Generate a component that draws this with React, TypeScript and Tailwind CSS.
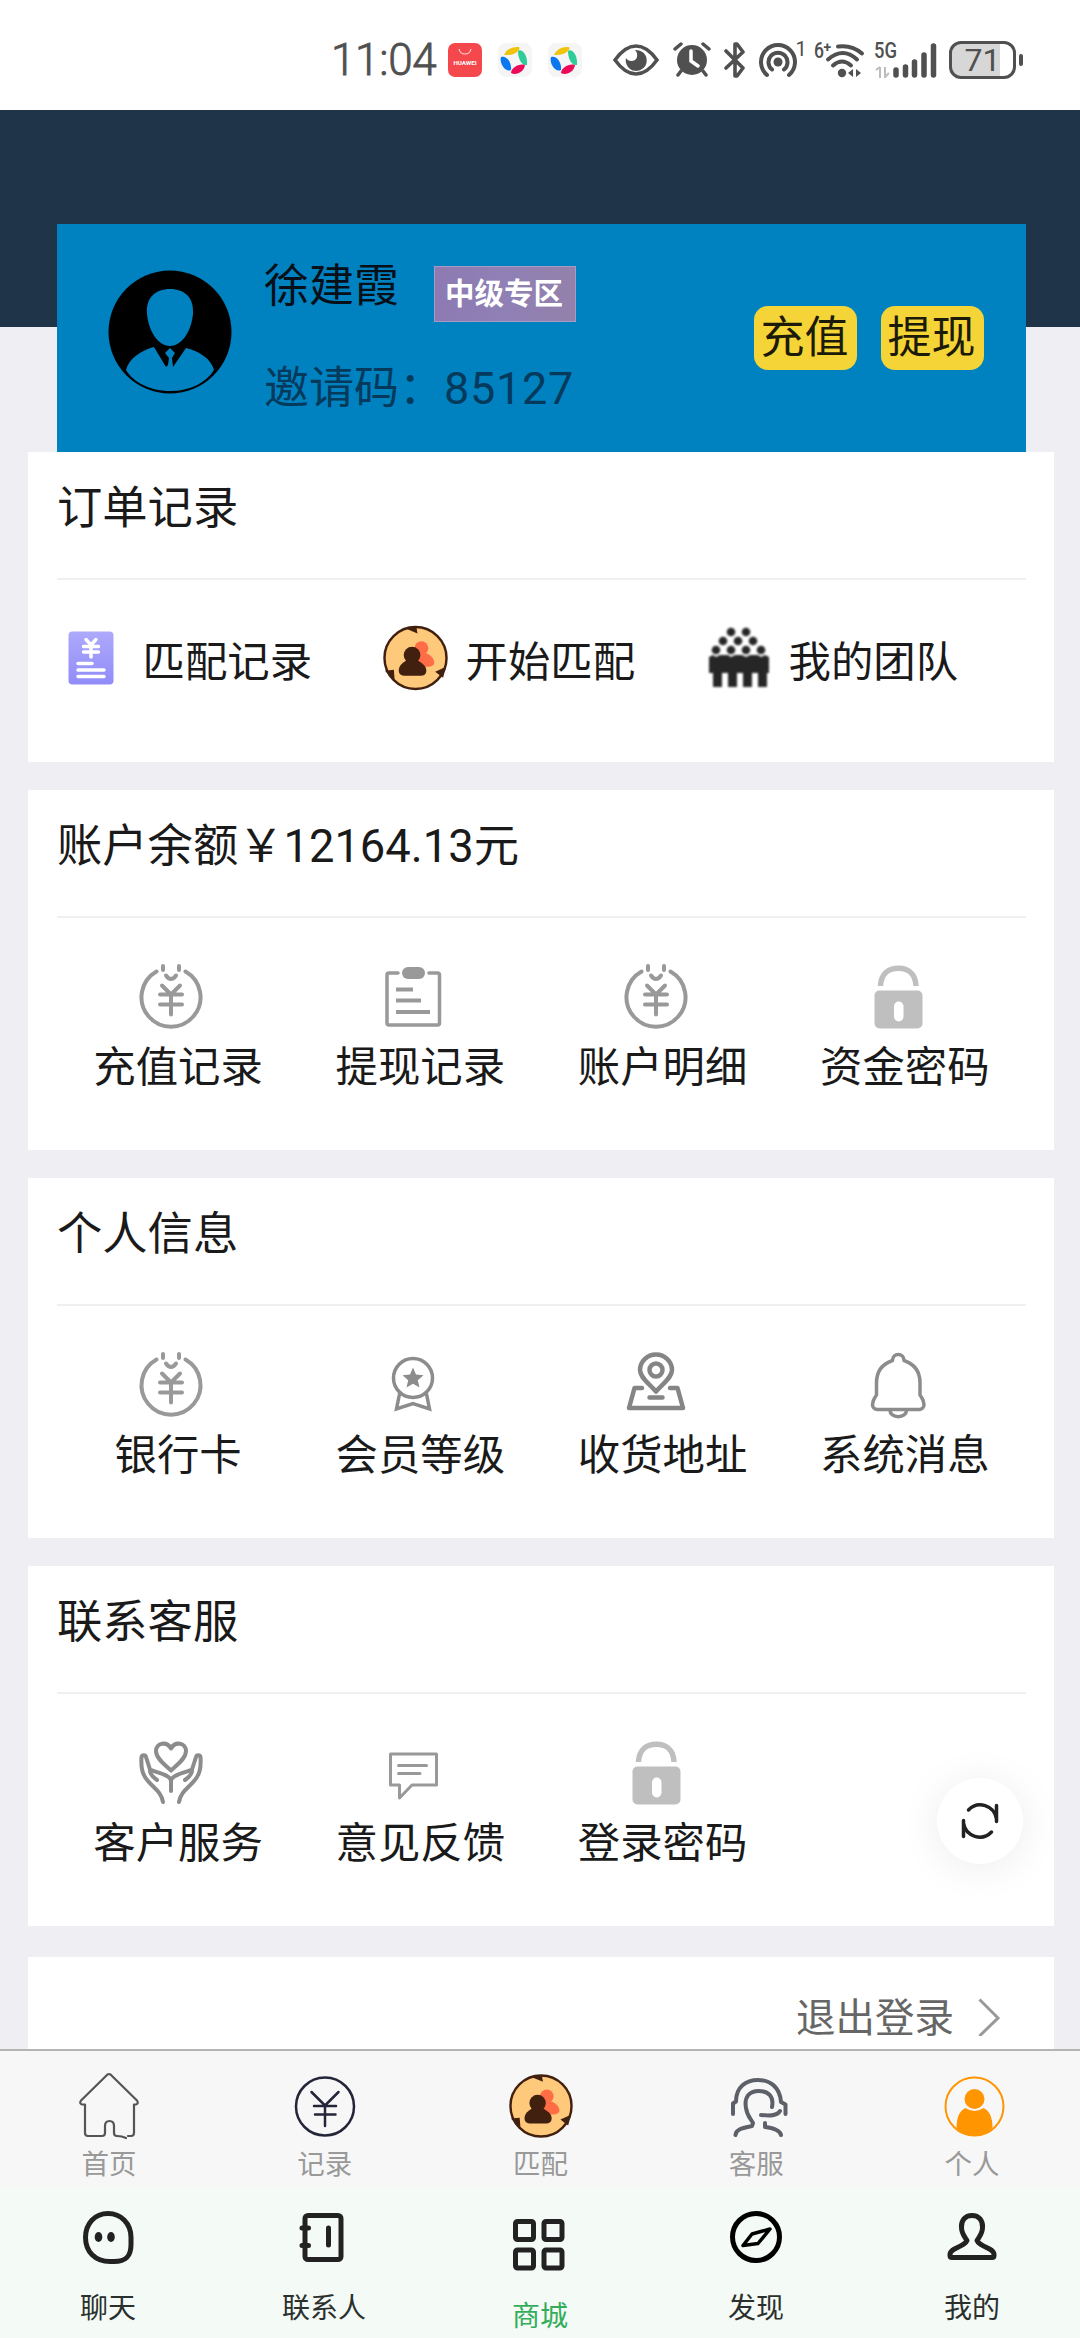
import { ReactNode } from 'react';

type Entry = { label: string; icon: ReactNode };

function LineIcon({ children, color = '#999', width = 4 }: { children: ReactNode; color?: string; width?: number }) {
  return (
    <svg
      className="h-16 w-16 overflow-visible"
      viewBox="0 0 64 64"
      fill="none"
      stroke={color}
      strokeWidth={width}
      strokeLinecap="round"
      strokeLinejoin="round"
    >
      {children}
    </svg>
  );
}

function MoneyBagIcon() {
  return (
    <LineIcon>
      <path d="M17.5 7.500A29.500 29.500 0 1 0 46.500 7.500" />
      <path d="M24 2v4M40 2v4M27 11.500q5 7 10 0" />
      <path d="M23 21.500l9 9 9-9M21 30.500h22M21 40.500h22M32 30.500v20" />
    </LineIcon>
  );
}

function ClipboardIcon() {
  return (
    <LineIcon width={3.5}>
      <path d="M17 9H8a2 2 0 0 0-2 2v48a2 2 0 0 0 2 2h48.500a2 2 0 0 0 2-2V11a2 2 0 0 0-2-2H48" />
      <rect x="21" y="3" width="23" height="12" rx="6" fill="#999" stroke="none" />
      <path d="M15 25.500h17M15 36.500h25M15 48h34" strokeWidth="4" strokeLinecap="butt" />
    </LineIcon>
  );
}

function LockIcon() {
  return (
    <LineIcon color="#bfbfbf" width={5.5}>
      <path d="M14.500 22C15 10 22.500 4.300 32.500 4.300S49.500 10 50 22" strokeLinecap="butt" />
      <rect x="8.500" y="26.500" width="48" height="38" rx="5" fill="#bfbfbf" stroke="none" />
      <rect x="28" y="37.500" width="9.500" height="20" rx="4.700" fill="#fff" stroke="none" />
    </LineIcon>
  );
}

function MedalIcon() {
  return (
    <LineIcon color="#8c8c8c" width={3.5}>
      <circle cx="32" cy="26" r="19.500" />
      <path d="M32 15.500l3 7 7.500.7-5.700 5 1.700 7.400-6.500-3.900-6.500 3.900 1.700-7.400-5.700-5 7.500-.7z" fill="#8c8c8c" stroke="none" />
      <path d="M18.500 42l-3 15L32 51.500l16.500 5.500-3-15" strokeLinejoin="miter" />
    </LineIcon>
  );
}

function LocationIcon() {
  return (
    <LineIcon color="#858585" width={4.5}>
      <path d="M32 39.500C25 31 16 26 16 18a16 15.500 0 0 1 32 0c0 8-9 13-16 21.500z" />
      <circle cx="32" cy="18" r="6.500" />
      <path d="M18 36h-7.500L5 56h54L53.500 36H46M25.500 45.500h13" />
    </LineIcon>
  );
}

function BellIcon() {
  return (
    <LineIcon color="#8c8c8c" width={3.5}>
      <path d="M26.500 8.500c0-8 11.500-8 11.500 0 10.500 3.500 16 11 16 22.500V43c2 3.500 4 5 4 9.500 0 3-2 5-5 5H11.500c-3 0-5-2-5-5 0-4.500 2-6 4-9.500V31c0-11.500 5.500-19 16-22.500z" />
      <path d="M24 58.500a8 6 0 0 0 16.500 0" />
    </LineIcon>
  );
}

function CareIcon() {
  return (
    <LineIcon color="#8c8c8c" width={4}>
      <path d="M32 30.500C27 25.500 17 19 17 11 17 2.500 28 1 32 8.500 36 1 47 2.500 47 11c0 8-10 14.500-15 19.500z" />
      <path d="M24 62c-2-12-12-15-18-25-4-6-4-13-3.500-20 .5-2.500 4-2.500 4.500 0l4 12.500c6 3 20 5 21 11V51" />
      <path d="M40 62c2-12 12-15 18-25 4-6 4-13 3.500-20-.5-2.500-4-2.500-4.500 0l-4 12.500c-6 3-20 5-21 11" />
      <path d="M11 30.500c0 4 3.500 7 7 9.500M53 30.500c0 4-3.500 7-7 9.500" />
    </LineIcon>
  );
}

function MessageIcon() {
  return (
    <LineIcon width={3}>
      <path d="M9.500 14h46v31H31L18.500 58V45h-9zM17.500 25.500h28M17.500 33.500h21.500" />
    </LineIcon>
  );
}

function CookieIcon({ className }: { className: string }) {
  return (
    <svg className={className} viewBox="0 0 66 66">
      <circle cx="33" cy="33" r="31.500" fill="#ffc97b" stroke="#42200f" strokeWidth="2.500" />
      <path d="M23 3l12 5-1-6zM2 46l9-1 1 12zM64 42l-11 5 8 6z" fill="#42200f" />
      <circle cx="39" cy="23" r="7" fill="#ff6d47" />
      <path d="M34 28h9c6 2 9 6 9 10 0 3-4 4-9 4h-9z" fill="#ff6d47" />
      <circle cx="29.500" cy="30" r="8.500" fill="#42200f" />
      <path d="M25 35h9c6 3 10 6 10 11 0 3-2 5-5 5H21c-3 0-5-2-5-5 0-5 3-8 9-11z" fill="#42200f" />
    </svg>
  );
}

function BillIcon() {
  return (
    <svg className="h-[54px] w-[46px]" viewBox="0 0 46 54">
      <defs>
        <linearGradient id="bill" x1="0" y1="0" x2="0" y2="1">
          <stop offset="0" stopColor="#ada9fb" />
          <stop offset="1" stopColor="#918cf8" />
        </linearGradient>
      </defs>
      <rect x="0.500" y="0.500" width="45" height="53" rx="4" fill="url(#bill)" />
      <path d="M18 8.500l5 5.500 5-5.500M23 14v12M15.500 15.500h15M15.500 21h15M10 32.500h14M10 39h26M10 45.500h26" fill="none" stroke="#fff" strokeWidth="3.500" strokeLinecap="round" />
    </svg>
  );
}

const teamHeads = [
  [23, 5], [38, 5],
  [15, 14], [30, 14], [45, 14],
  [8, 23], [23, 23], [38, 23], [53, 23],
];

function TeamIcon() {
  return (
    <svg className="h-[62px] w-[62px] blur-[0.8px]" viewBox="0 0 62 62" fill="#262626">
      {teamHeads.map(([x, y]) => (
        <circle key={`${x}-${y}`} cx={x} cy={y} r="4.300" />
      ))}
      <path d="M1 30l4-2 3 2 4-2h8l3 2 4-2h7l4 2 4-2h8l3 2 4-2 4 2v16h-2v14h-9V46h-6v14h-9V46h-6v14h-9V46h-6v14H5V46H1z" />
    </svg>
  );
}

function AvatarIcon() {
  return (
    <svg className="h-[124px] w-[124px]" viewBox="0 0 124 124">
      <circle cx="62" cy="62" r="61.500" fill="#000" />
      <path d="M62 19c15 0 24 9 23 24-1 16-10 33-23 33S40 59 39 43c-1-15 8-24 23-24z" fill="#0082c1" />
      <path d="M46 77l12 20 2-2 1-7-4-5 5-5 5 5-3 5 1 9 13-19c12 3 25 10 28 22-8 13-24 21-44 21s-37-9-44-21c3-12 16-20 28-23z" fill="#0082c1" />
    </svg>
  );
}

function BrowserIcon() {
  return (
    <svg className="h-[34px] w-[34px]" viewBox="0 0 34 34">
      <rect width="34" height="34" rx="8" fill="#f5f5f5" />
      <path d="M6 12q4-9 15-8c2 2-3 9-15 8z" fill="#f0c30c" />
      <path d="M20 8c3-3 10 3 9 14-6 1-9-7-9-14z" fill="#2fcb98" />
      <path d="M3 14c5-2 11 5 10 13C8 30 1 21 3 14z" fill="#0b78f0" />
      <path d="M13 30c0-5 8-10 14-8-1 7-9 11-14 8z" fill="#ee0a5b" />
    </svg>
  );
}

function StatusBar() {
  return (
    <div className="flex h-[110px] shrink-0 items-center bg-white pt-[10px] pl-[331px] text-[#505050]">
      <span className="w-[117px] font-[Roboto] text-[44px] leading-none font-light tracking-[-0.3px] [-webkit-text-stroke:0.8px_#505050]">11:04</span>
      <svg className="h-[34px] w-[34px]" viewBox="0 0 34 34">
        <rect width="34" height="34" rx="7" fill="#f5484d" />
        <path d="M11 6q1 5 6 5t6-5" fill="none" stroke="#ffd5d5" strokeWidth="1.200" />
        <text x="17" y="22" textAnchor="middle" fontFamily="Roboto, sans-serif" fontSize="6.200" fontWeight="700" fill="#fff">HUAWEI</text>
      </svg>
      <div className="ml-4 flex gap-4">
        <BrowserIcon />
        <BrowserIcon />
      </div>

      <svg className="ml-[31px] h-[34px] w-[46px]" viewBox="0 0 46 34">
        <path d="M2 17Q12 3 23 3t21 14Q34 31 23 31T2 17z" fill="none" stroke="#505050" strokeWidth="3.500" />
        <path d="M22 7a10.500 10.500 0 1 1-9 8c2 4 10 4 11-1 .5-3 0-5-2-7z" fill="#505050" />
      </svg>
      <svg className="ml-[14px] h-[36px] w-[38px]" viewBox="0 0 38 36">
        <circle cx="19" cy="18" r="15" fill="#505050" />
        <path d="M2 7l6-5M36 7l-6-5M8 29l-3 4M30 29l3 4" stroke="#505050" strokeWidth="3.500" strokeLinecap="round" />
        <path d="M18 9v10l7 5" fill="none" stroke="#fff" strokeWidth="3.500" strokeLinecap="round" />
      </svg>
      <svg className="ml-[13px] h-[36px] w-[22px]" viewBox="0 0 22 36" fill="none" stroke="#505050" strokeWidth="3.600" strokeLinecap="round" strokeLinejoin="round">
        <path d="M2 9l17 17-6 8h-2V2h2l6 8L2 26" />
      </svg>
      <svg className="ml-[12px] h-[36px] w-[50px] overflow-visible" viewBox="0 0 50 36" fill="none" stroke="#505050" strokeWidth="4" strokeLinecap="round">
        <circle cx="20" cy="20" r="4.500" fill="#505050" stroke="none" />
        <path d="M14 27.500a9.500 9.500 0 1 1 12 0M9 33a17 17 0 1 1 22 0" />
        <text x="37.500" y="13.500" fontFamily="Roboto, sans-serif" fontSize="20" fill="#505050" stroke="none">1</text>
      </svg>
      <svg className="ml-[7px] h-[36px] w-[50px] overflow-visible" viewBox="0 0 50 36" fill="none" stroke="#505050" strokeWidth="4" strokeLinecap="round">
        <text x="-1" y="15.500" fontFamily="Roboto, sans-serif" fontSize="22" fontWeight="500" textLength="10" lengthAdjust="spacingAndGlyphs" fill="#505050" stroke="none">6</text>
        <text x="8.500" y="9.500" fontFamily="Roboto, sans-serif" fontSize="14" fontWeight="700" fill="#505050" stroke="none">+</text>
        <path d="M23 4.500q14-2 24 7M13 17.500q15-13 29 0M18 23.500q9-8 18 0" />
        <circle cx="27" cy="31" r="4.200" fill="#505050" stroke="none" />
        <path d="M38 27v8l-5-4zM41 27v8l5-4z" fill="#505050" stroke="none" />
      </svg>
      <svg className="ml-[9px] h-[36px] w-[64px] overflow-visible" viewBox="0 0 64 36">
        <text x="0" y="16" fontFamily="Roboto, sans-serif" fontSize="22" fontWeight="500" textLength="23" lengthAdjust="spacingAndGlyphs" fill="#505050">5G</text>
        <path d="M6 25v11M2 28l4-3M11 25v11M15 31l-4 4" stroke="#bdbdbd" strokeWidth="2" />
        <path d="M22 28v5M31.500 25v8M40.500 20v13M50 13v20M59.500 4v29" stroke="#505050" strokeWidth="5.500" strokeLinecap="round" />
      </svg>
      <div className="ml-[11px] flex h-[38px] w-[67px] items-center justify-center rounded-xl border-[3px] border-[#505050] bg-linear-to-r from-[#d7d7d7] from-78% to-white to-78% font-[Roboto] text-[32px] leading-none">
        71
      </div>
      <div className="ml-[3px] h-[12px] w-[4px] rounded-full bg-[#505050]" />
    </div>
  );
}

function ProfileCard() {
  return (
    <div className="flex h-[228px] bg-[#0082c1] pl-[51px]">
      <div className="mt-[46px]">
        <AvatarIcon />
      </div>
      <div className="ml-[32px] w-[470px] text-[45px] leading-[60px]">
        <div className="mt-[30px] flex h-[68px] items-start">
          <span className="w-[170px] pt-[3px] text-[#071018]">徐建霞</span>
          <span className="mt-[12px] flex h-[56px] w-[142px] items-center justify-center border border-[#a79bc4] bg-linear-to-r from-[#8d7ab2] via-[#8f80b5] to-[#9481ab] pr-[2px] text-[29.5px] font-bold text-white">
            中级专区
          </span>
        </div>
        <div className="mt-[37px] text-[#053a5c]">
          邀请码：<span className="tracking-[0.7px]">85127</span>
        </div>
      </div>
      <div className="mt-[82px] ml-[20px] flex gap-[24px]">
        {['充值', '提现'].map((label) => (
          <button key={label} type="button" className="h-[64px] w-[103px] rounded-[14px] bg-[#f5d437] pr-[2px] text-[44px] leading-[64px] whitespace-nowrap text-[#1c1a08]">
            {label}
          </button>
        ))}
      </div>
    </div>
  );
}

function SectionTitle({ children }: { children: ReactNode }) {
  return <h2 className="h-[128px] border-b-2 border-[#f0f0f0] pt-[26px] text-[45.3px] leading-[62px]">{children}</h2>;
}

function GridSection({ title, entries }: { title: string; entries: Entry[] }) {
  return (
    <section className="mb-[28px] h-[360px] bg-white pr-[28px] pl-[29px]">
      <SectionTitle>{title}</SectionTitle>
      <div className="grid grid-cols-4 pt-[46px]">
        {entries.map((entry) => (
          <div key={entry.label} className="flex flex-col items-center">
            <div className="mr-[14px]">{entry.icon}</div>
            <span className="mt-[8px] text-[42.4px] leading-[63px]">{entry.label}</span>
          </div>
        ))}
      </div>
    </section>
  );
}

const accountEntries: Entry[] = [
  { label: '充值记录', icon: <MoneyBagIcon /> },
  { label: '提现记录', icon: <ClipboardIcon /> },
  { label: '账户明细', icon: <MoneyBagIcon /> },
  { label: '资金密码', icon: <LockIcon /> },
];

const profileEntries: Entry[] = [
  { label: '银行卡', icon: <MoneyBagIcon /> },
  { label: '会员等级', icon: <MedalIcon /> },
  { label: '收货地址', icon: <LocationIcon /> },
  { label: '系统消息', icon: <BellIcon /> },
];

const contactEntries: Entry[] = [
  { label: '客户服务', icon: <CareIcon /> },
  { label: '意见反馈', icon: <MessageIcon /> },
  { label: '登录密码', icon: <LockIcon /> },
];

const orderEntries: Entry[] = [
  { label: '匹配记录', icon: <BillIcon /> },
  { label: '开始匹配', icon: <CookieIcon className="h-[66px] w-[66px]" /> },
  { label: '我的团队', icon: <TeamIcon /> },
];

const siteTabs: Entry[] = [
  {
    label: '首页',
    icon: (
      <LineIcon color="#555" width={2.2}>
        <path d="M51 64h3q3 0 3-3V32.500h2q3-1 1-4L33.500 2.500q-1.500-1-3 0L4 28.500q-2 3 1 4h3V61q0 3 3 3h14q3 0 3-3V54q0-5 4.500-5t4.500 5v7q0 3 3 3 5 0 9 2" />
      </LineIcon>
    ),
  },
  {
    label: '记录',
    icon: (
      <LineIcon color="#25253a" width={2.5}>
        <circle cx="32" cy="34.500" r="29" />
        <path d="M18.500 20L32 33.500 45.500 20M21 34h22M22 42.500h20.500M32 34v20" />
      </LineIcon>
    ),
  },
  {
    label: '匹配',
    icon: (
      <div className="h-16 pt-[2px] pl-[2px]">
        <CookieIcon className="h-16 w-16" />
      </div>
    ),
  },
  {
    label: '客服',
    icon: (
      <LineIcon color="#5d6068" width={4}>
        <path d="M9 42V31.500l3-2C12 15 22 8 34 8S56 15 57 30l4.500 2.500V42" />
        <path d="M48 35c2-10-3-16-13-16s-15 6-13 17c1 8 5 11 7 15l-1 3C19 56 12 57 11.500 63M37 43c9 1 16 1 19-4M41 51v4c8 1 15 3 16 8" />
      </LineIcon>
    ),
  },
  {
    label: '个人',
    icon: (
      <LineIcon color="#ff9500" width={2}>
        <circle cx="34.500" cy="34.500" r="29" />
        <g fill="#ff9500" stroke="none">
          <circle cx="34.500" cy="27" r="10" />
          <path d="M25.500 36q9 6 18 0c6 3 9 9 9 20q-8 8-18 8t-18-8c0-11 3-17 9-20z" />
        </g>
      </LineIcon>
    ),
  },
];

const appTabs: Entry[] = [
  {
    label: '聊天',
    icon: (
      <LineIcon color="#222" width={5}>
        <path d="M32 8.500c13 0 23 10 23 24v7c0 12-5 17-17 17h-4C19 56.500 9.500 46.500 9.500 32.500S19 8.500 32 8.500z" />
        <ellipse cx="22.500" cy="32" rx="3.800" ry="5" fill="#222" stroke="none" />
        <ellipse cx="35" cy="32" rx="3.800" ry="5" fill="#222" stroke="none" />
      </LineIcon>
    ),
  },
  {
    label: '联系人',
    icon: (
      <LineIcon color="#222" width={5}>
        <rect x="13" y="10.500" width="36" height="44" rx="3" />
        <path d="M10 23h6.500M10 40.500h6.500M36.500 23v17" />
      </LineIcon>
    ),
  },
  {
    label: '商城',
    icon: (
      <LineIcon color="#222" width={5}>
        <rect x="7.500" y="8.500" width="18" height="18" rx="2" />
        <rect x="36" y="8.500" width="18" height="18" rx="2" />
        <rect x="7.500" y="37" width="18" height="18" rx="2" />
        <rect x="36" y="37" width="18" height="18" rx="2" />
      </LineIcon>
    ),
  },
  {
    label: '发现',
    icon: (
      <LineIcon color="#000" width={5}>
        <circle cx="32" cy="32" r="23.500" />
        <path d="M46 24L28 29 19 40.500l15-2z" strokeWidth="3.500" />
      </LineIcon>
    ),
  },
  {
    label: '我的',
    icon: (
      <LineIcon color="#222" width={5}>
        <path d="M32 10.500c7 0 11 5 10.500 12 0 6-3 9-5.500 13 3 7 17 7 17 14v1q0 2-2 2H12q-2 0-2-2v-1c0-7 14-7 17-14-2.500-4-5.500-7-5.500-13C21 15.500 25 10.500 32 10.500z" />
      </LineIcon>
    ),
  },
];

export default function App() {
  return (
    <div className="relative flex h-[2338px] w-[1080px] flex-col overflow-hidden bg-[#efeef3] font-[Roboto,'Noto_Sans_CJK_SC',sans-serif] text-[#1a1a1a]">
      <StatusBar />

      <main className="min-h-0 flex-1 overflow-hidden">
        <header className="h-[217px] bg-[#1f3448] pt-[114px] pr-[54px] pl-[57px]">
          <ProfileCard />
        </header>

        <div className="mx-[28px] mt-[125px] w-[1026px]">
          <section className="mb-[28px] h-[310px] bg-white pr-[28px] pl-[29px]">
            <SectionTitle>订单记录</SectionTitle>
            <div className="flex pt-[44px]">
              {orderEntries.map((entry) => (
                <div key={entry.label} className="flex h-[68px] w-[323px] shrink-0 items-center">
                  <div className={entry.label === '匹配记录' ? 'flex w-[68px] justify-center' : 'flex w-[68px] justify-center pl-[3px]'}>
                    {entry.icon}
                  </div>
                  <span className="mt-[9px] ml-[17.5px] text-[42.4px] leading-[64px]">{entry.label}</span>
                </div>
              ))}
            </div>
          </section>

          <GridSection title="账户余额￥12164.13元" entries={accountEntries} />
          <GridSection title="个人信息" entries={profileEntries} />
          <GridSection title="联系客服" entries={contactEntries} />

          <section className="mt-[31px] flex h-[120px] items-center justify-end bg-white pr-[54px] text-[#666]">
            <span className="pt-[3px] text-[39.5px] leading-none">退出登录</span>
            <svg className="ml-[24px] h-[38px] w-[22px]" viewBox="0 0 22 38" fill="none" stroke="#999" strokeWidth="3">
              <path d="M1.500 1.500L20 20 1.500 38" />
            </svg>
          </section>
        </div>
      </main>

      <nav className="h-[138px] shrink-0 border-t-2 border-[#b4b4b4] bg-[#f7f7f7]">
        <div className="grid grid-cols-5 pt-[21px] pl-[1px]">
          {siteTabs.map((tab) => (
            <div key={tab.label} className="flex flex-col items-center">
              {tab.icon}
              <span className="mt-[9px] text-[27.5px] leading-[40px] text-[#999]">{tab.label}</span>
            </div>
          ))}
        </div>
      </nav>

      <nav className="grid h-[151px] shrink-0 grid-cols-5 bg-[#f4faf6] pt-[18px]">
        {appTabs.map((tab) => (
          <div
            key={tab.label}
            className={tab.label === '商城' ? 'flex flex-col items-center pt-[8px] text-[#34ad5b]' : 'flex flex-col items-center text-[#2b302d]'}
          >
            {tab.icon}
            <span className="mt-[20px] text-[28px] leading-[40px]">{tab.label}</span>
          </div>
        ))}
      </nav>

      <button type="button" className="absolute top-[1778px] left-[937px] h-[86px] w-[86px] rounded-full bg-white shadow-[0_4px_40px_rgba(0,0,0,0.08)]">
        <svg className="h-[86px] w-[86px]" viewBox="-43 -43 86 86" fill="none" stroke="#222" strokeWidth="3.500" strokeLinecap="round">
          <path d="M-11.500-11A16.500 17 0 0 1 16.500-2M16.500-15.500V.5" />
          <path d="M11.500 11A16.500 17 0 0 1-16.500 2M-16.500 15.500V-.5" />
        </svg>
      </button>
    </div>
  );
}
